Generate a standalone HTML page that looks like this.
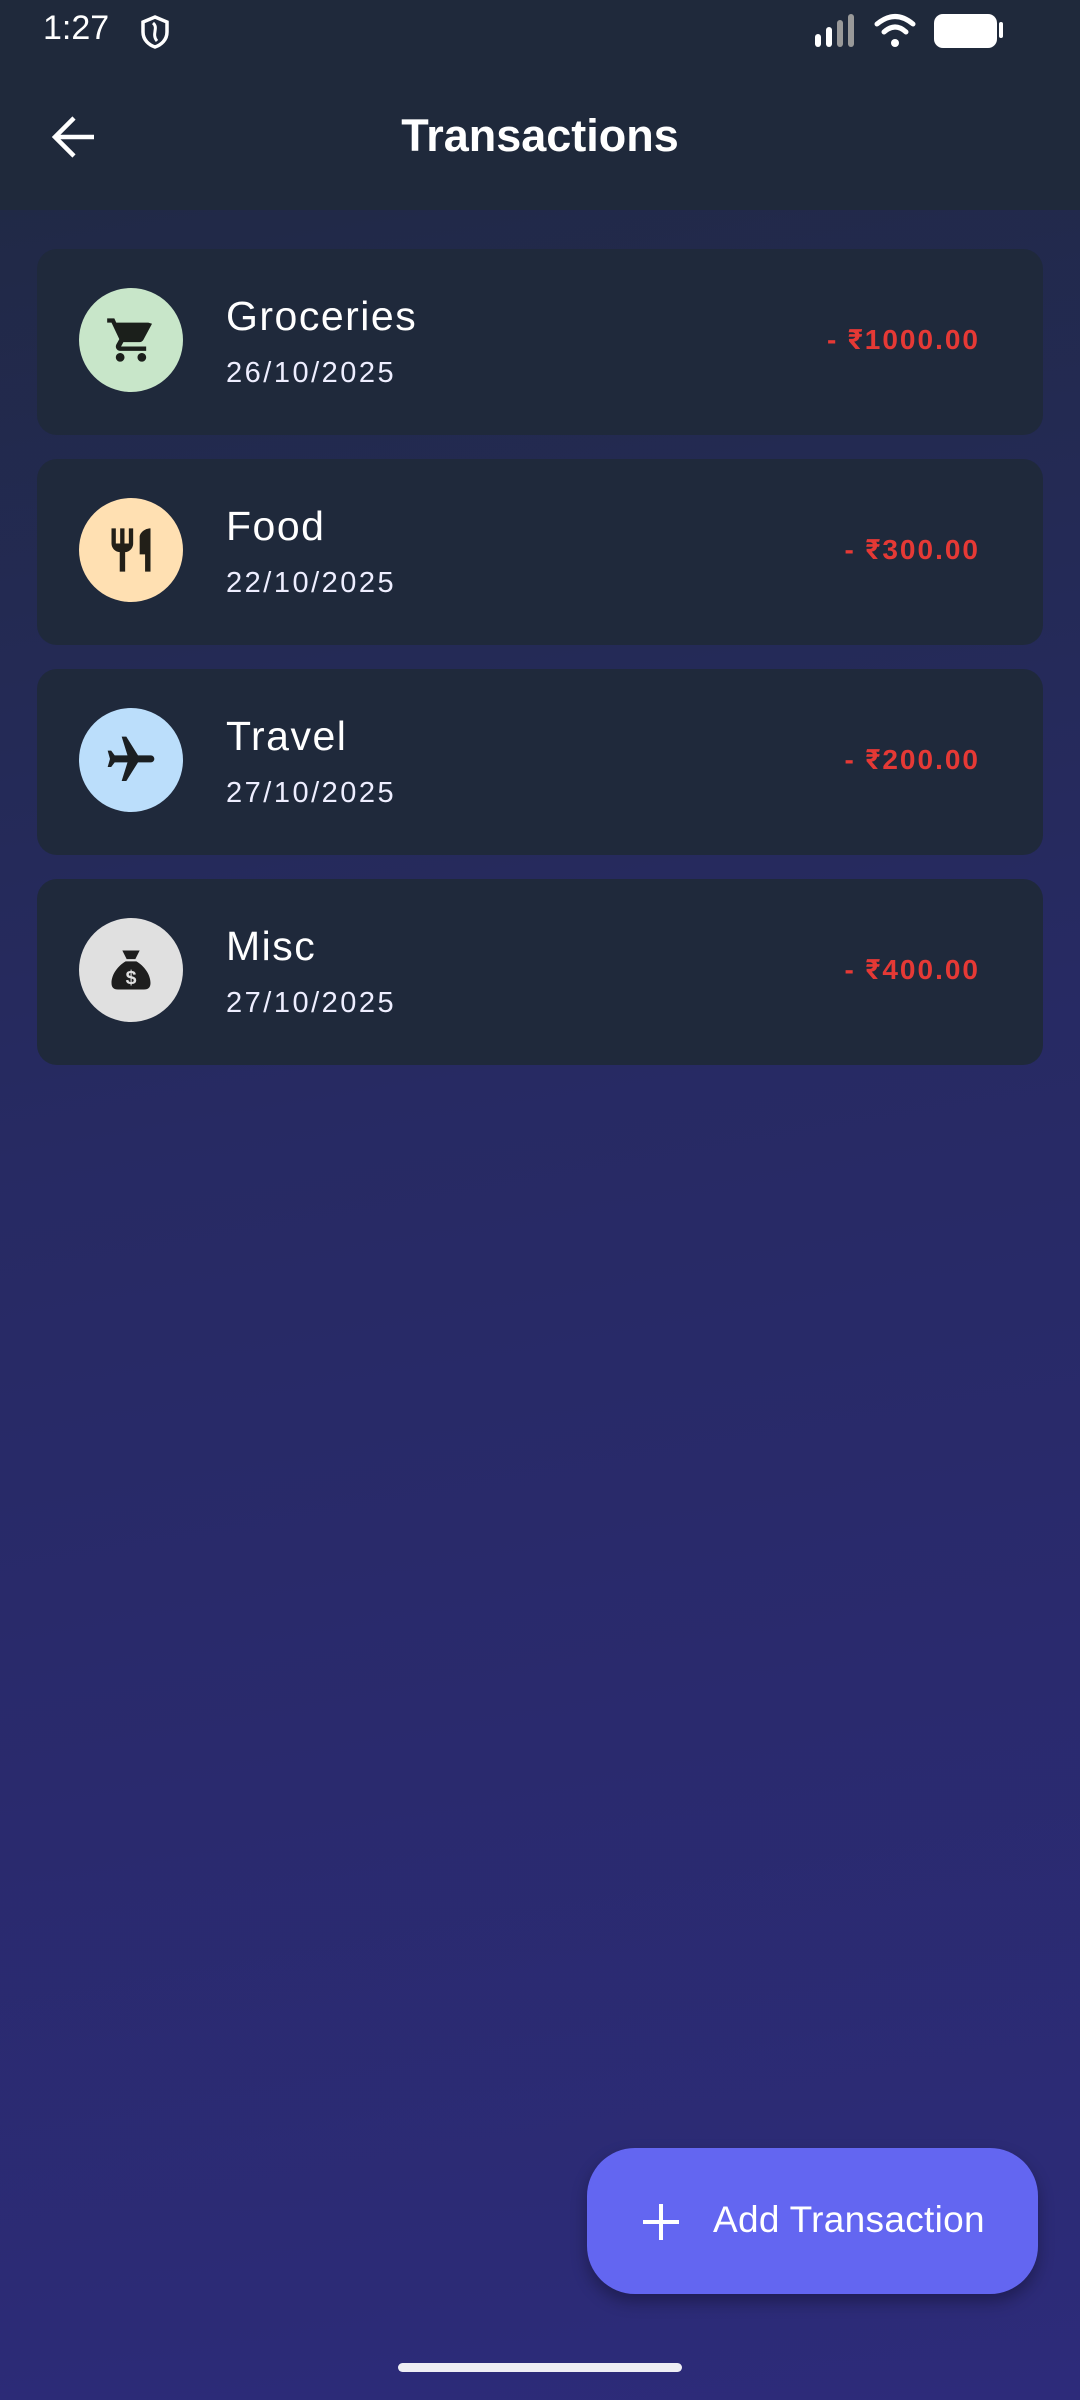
<!DOCTYPE html>
<html><head><meta charset="utf-8"><style>
*{margin:0;padding:0;box-sizing:border-box}
body{width:1080px;height:2400px;overflow:hidden;font-family:"Liberation Sans",Roboto,sans-serif;background:linear-gradient(170deg,#1f2940 0%,#272a63 45%,#2d2b7a 100%);position:relative;color:#fff}
.hdr{position:absolute;left:0;top:0;width:1080px;height:210px;background:#1f293b}
.time{position:absolute;left:43px;top:9px;font-size:34px}
.title{position:absolute;left:0;width:1080px;top:110px;text-align:center;font-size:45px;font-weight:bold}
.card{position:absolute;left:37px;width:1006px;height:186px;background:#1f293b;border-radius:20px}
.circ{position:absolute;left:42px;top:39px;width:104px;height:104px;border-radius:50%;display:flex;align-items:center;justify-content:center}
.name{position:absolute;left:189px;top:44px;font-size:41px;letter-spacing:1.5px}
.date{position:absolute;left:189px;top:108px;font-size:29px;letter-spacing:2.5px;color:#eef}
.amt{position:absolute;right:63px;top:74px;font-size:28px;font-weight:bold;color:#e53935;letter-spacing:2px}
.fab{position:absolute;left:587px;top:2148px;width:451px;height:146px;background:#6366f1;border-radius:48px;box-shadow:0 8px 16px rgba(0,0,0,.3)}
.fab span{position:absolute;left:126px;top:51px;font-size:37px;letter-spacing:.3px}
.home{position:absolute;left:398px;top:2363px;width:284px;height:9px;border-radius:5px;background:#eeeef4}
</style></head><body>
<div class="hdr">
<div class="time">1:27</div>
<svg style="position:absolute;left:139px;top:14px" width="32" height="36" viewBox="0 0 32 36"><path d="M16 3 L28 8 V18 C28 26 22 31 16 33 C10 31 4 26 4 18 V8 Z" fill="none" stroke="#fff" stroke-width="3.5"/><path d="M14 9 C20 14 12 20 18 27" fill="none" stroke="#fff" stroke-width="3"/></svg>
<svg style="position:absolute;left:815px;top:14px" width="48" height="34"><rect x="0" y="20" width="6" height="13" rx="3" fill="#fff"/><rect x="11" y="13" width="6" height="20" rx="3" fill="#fff"/><rect x="22" y="6" width="6" height="27" rx="3" fill="#999"/><rect x="33" y="0" width="6" height="33" rx="3" fill="#999"/></svg>
<svg style="position:absolute;left:874px;top:12px" width="42" height="36" viewBox="0 0 42 36"><path d="M3 12 Q21 -3 39 12" fill="none" stroke="#fff" stroke-width="5" stroke-linecap="round"/><path d="M10 20 Q21 10 32 20" fill="none" stroke="#fff" stroke-width="5" stroke-linecap="round"/><circle cx="21" cy="31" r="4" fill="#fff"/></svg>
<div style="position:absolute;left:934px;top:14px;width:63px;height:34px;border-radius:9px;background:#fff"></div>
<div style="position:absolute;left:999px;top:22px;width:4px;height:16px;border-radius:2px;background:#fff"></div>
<svg style="position:absolute;left:50px;top:114px" width="48" height="46" viewBox="0 0 48 46"><path d="M44 23 H6 M24 4 L5 23 L24 42" fill="none" stroke="#fff" stroke-width="4.5"/></svg>
<div class="title">Transactions</div>
</div>

<div class="card" style="top:249px"><div class="circ" style="background:#c8e6c9"><svg width="52" height="52" viewBox="0 0 24 24"><path fill="#1b1f1b" d="M7 18c-1.1 0-2 .9-2 2s.9 2 2 2 2-.9 2-2-.9-2-2-2zM1 2v2h2l3.6 7.6-1.35 2.4C4.5 15.4 5.5 17 7 17h12v-2H7.4l1.1-2h7.45c.75 0 1.4-.4 1.750-1.03L21.7 4.5 20 4H5.2l-.9-2H1zm16 16c-1.1 0-2 .9-2 2s.9 2 2 2 2-.9 2-2-.9-2-2-2z"/></svg></div><div class="name">Groceries</div><div class="date">26/10/2025</div><div class="amt">- ₹1000.00</div></div>

<div class="card" style="top:459px"><div class="circ" style="background:#ffe0b2"><svg width="52" height="52" viewBox="0 0 24 24"><path fill="#221f18" d="M11 9H9V2H7v7H5V2H3v7c0 2.1 1.7 3.9 3.8 4V22h2.5v-9c2.1-.1 3.7-1.9 3.7-4V2h-2v7zm5-3v8h2.5v8H21V2c-2.8 0-5 2.2-5 4z"/></svg></div><div class="name">Food</div><div class="date">22/10/2025</div><div class="amt">- ₹300.00</div></div>

<div class="card" style="top:669px"><div class="circ" style="background:#bbdefb"><svg width="56" height="56" viewBox="0 0 24 24"><path fill="#1b1f22" d="M21 16v-2l-8-5V3.5c0-.8-.7-1.5-1.5-1.5S10 2.7 10 3.5V9l-8 5v2l8-2.5V19l-2 1.5V22l3.5-1 3.5 1v-1.5L13 19v-5.5l8 2.5z" transform="rotate(90 12 12)"/></svg></div><div class="name">Travel</div><div class="date">27/10/2025</div><div class="amt">- ₹200.00</div></div>

<div class="card" style="top:879px"><div class="circ" style="background:#e0e0e0"><svg width="52" height="52" viewBox="0 0 24 24"><path fill="#1e1e1e" d="M8 3h8l-2 4h-4zM9.5 8h5C18 10 21 14 21 18c0 2-1 3-3 3H6c-2 0-3-1-3-3 0-4 3-8 6.5-10z"/><text x="12" y="18.5" text-anchor="middle" font-size="9" font-weight="bold" fill="#e0e0e0" font-family="Liberation Sans">$</text></svg></div><div class="name">Misc</div><div class="date">27/10/2025</div><div class="amt">- ₹400.00</div></div>

<div class="fab"><svg style="position:absolute;left:54px;top:54px" width="40" height="40"><path d="M20 2V38M2 20H38" stroke="#fff" stroke-width="4"/></svg><span>Add Transaction</span></div>
<div class="home"></div>
</body></html>
